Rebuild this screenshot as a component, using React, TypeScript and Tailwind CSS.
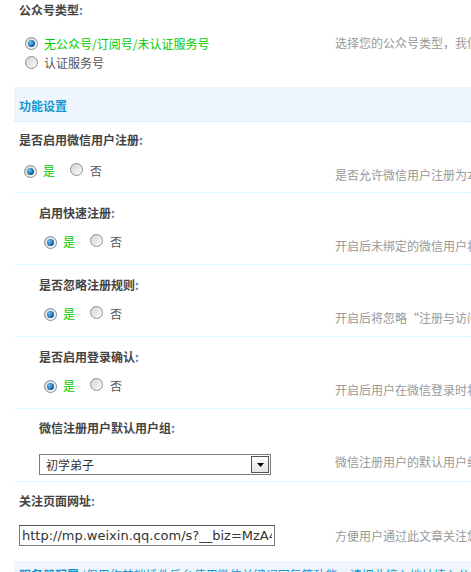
import React from "react"

const font = { fontFamily: '"Noto Sans CJK SC", "Liberation Sans", sans-serif' }

function Radio({ checked }: { checked?: boolean }) {
  return (
    <span className="relative inline-flex h-[13px] w-[13px] shrink-0 items-center justify-center rounded-full border border-[#8c8c8c] bg-gradient-to-br from-[#d4d4d4] to-[#fbfbfb]">
      {checked && (
        <span className="h-[7px] w-[7px] rounded-full bg-[radial-gradient(circle_at_35%_35%,#6ec3f2,#0a5aa0_70%)]" />
      )}
    </span>
  )
}

function YesNo() {
  return (
    <div className="flex items-center">
      <Radio checked />
      <span className="ml-[6px] text-[#00cc00]">是</span>
      <span className="ml-[15px]">
        <Radio />
      </span>
      <span className="ml-[7px] text-[#555]">否</span>
    </div>
  )
}

function Label({ text, indent }: { text: string; indent?: boolean }) {
  return (
    <div className={`h-[20px] font-bold leading-[20px] text-[#444] ${indent ? "pl-[39px]" : "pl-[19px]"}`}>
      {text}
      <span className="text-[#4a7fb5]">:</span>
    </div>
  )
}

function Tip({ text, offset }: { text: string; offset: string }) {
  return <div className={`min-w-0 overflow-hidden whitespace-nowrap pl-[19px] text-[#999] ${offset}`}>{text}</div>
}

function SubRow({ label, tip }: { label: string; tip: string }) {
  return (
    <div className="ml-[14px] border-b border-dotted border-[#d3e8f7]">
      <div className="-ml-[14px] pt-[10px]">
        <Label text={label} indent />
      </div>
      <div className="-ml-[14px] mb-[3px] flex h-[38px] items-center">
        <div className="w-[316px] shrink-0 pl-[44px]">
          <YesNo />
        </div>
        <Tip text={tip} offset="pt-[8px]" />
      </div>
    </div>
  )
}

export default function App() {
  return (
    <div className="h-[572px] w-[471px] overflow-hidden bg-white text-[12px] leading-[16px]" style={font}>
      {/* 公众号类型 */}
      <Label text="公众号类型" />
      <div className="flex pb-[15px] pt-[14px]">
        <div className="w-[316px] shrink-0 pl-[19px]">
          <div className="flex h-[19px] items-center pl-[6px]">
            <Radio checked />
            <span className="ml-[6px] whitespace-nowrap text-[#00cc00]">无公众号/订阅号/未认证服务号</span>
          </div>
          <div className="flex h-[19px] items-center pl-[6px]">
            <Radio />
            <span className="ml-[6px] text-[#555]">认证服务号</span>
          </div>
        </div>
        <Tip text="选择您的公众号类型，我们将根据类型开放相应功能" offset="pt-[1px]" />
      </div>

      {/* 功能设置 */}
      <div className="ml-[14px] flex h-[35px] items-center border-b border-dotted border-[#d3e8f7] bg-[#eef5fc] pl-[5px] pt-[3px] font-bold text-[#1495cf]">
        功能设置
      </div>

      <div className="ml-[14px] border-b border-dotted border-[#d3e8f7]">
        <div className="-ml-[14px] pt-[8px]">
          <Label text="是否启用微信用户注册" />
        </div>
        <div className="-ml-[14px] flex h-[42px] items-center">
          <div className="w-[316px] shrink-0 pl-[24px]">
            <YesNo />
          </div>
          <Tip text="是否允许微信用户注册为本站会员" offset="pt-[8px]" />
        </div>
      </div>

      <SubRow label="启用快速注册" tip="开启后未绑定的微信用户将自动注册" />
      <SubRow label="是否忽略注册规则" tip="开启后将忽略“注册与访问控制”中的设置" />
      <SubRow label="是否启用登录确认" tip="开启后用户在微信登录时将需要确认" />

      <div className="ml-[14px] border-b border-dotted border-[#d3e8f7]">
        <div className="-ml-[14px] pt-[9px]">
          <Label text="微信注册用户默认用户组" indent />
        </div>
        <div className="-ml-[14px] flex pb-[6px] pt-[16px]">
          <div className="w-[316px] shrink-0 pl-[39px]">
            <div className="flex h-[21px] w-[232px] items-center justify-between border border-[#7a7a7a] bg-white pl-[6px] pr-[1px] text-[#333]">
              <span>初学弟子</span>
              <span className="flex h-[17px] w-[18px] items-center justify-center border border-[#555] bg-gradient-to-b from-white to-[#e4e4e4]">
                <svg width="7" height="4" viewBox="0 0 7 4">
                  <path d="M0 0h7L3.5 4z" fill="#000" />
                </svg>
              </span>
            </div>
          </div>
          <Tip text="微信注册用户的默认用户组" offset="pt-[0px]" />
        </div>
      </div>

      <div className="pt-[9px]">
        <Label text="关注页面网址" />
      </div>
      <div className="flex pb-[15px] pt-[14px]">
        <div className="w-[316px] shrink-0 pl-[19px]">
          <input
            readOnly
            value="http://mp.weixin.qq.com/s?__biz=MzA4OTQ2NjQwMQ==&mid=200"
            className="block h-[21px] w-[256px] border border-[#7a7a7a] border-t-[#555] px-[2px] text-[13px] text-[#333] outline-none"
            style={{ fontFamily: '"DejaVu Sans", sans-serif' }}
          />
        </div>
        <Tip text="方便用户通过此文章关注您的公众号" offset="pt-[3px]" />
      </div>

      <div className="ml-[14px] h-[40px] overflow-hidden whitespace-nowrap bg-[#eef5fc] pl-[5px] pt-[6px] text-[#1495cf]">
        <span className="font-bold">服务器配置</span> (仅用作前端插件后台使用微信关键词回复等功能，请把此接入地址填入公众平台)
      </div>
    </div>
  )
}
